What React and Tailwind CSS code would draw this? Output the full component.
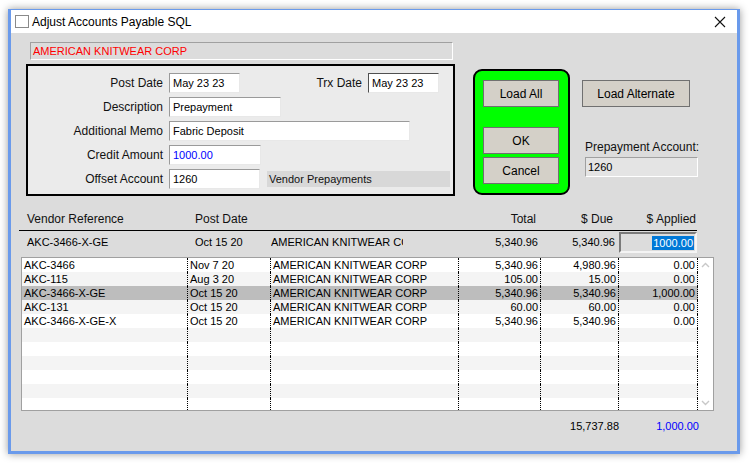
import React from 'react'

const FONT = { fontFamily: '"Liberation Sans", Arial, sans-serif' }

const ROWS = [
  ['AKC-3466', 'Nov 7 20', 'AMERICAN KNITWEAR CORP', '5,340.96', '4,980.96', '0.00'],
  ['AKC-115', 'Aug 3 20', 'AMERICAN KNITWEAR CORP', '105.00', '15.00', '0.00'],
  ['AKC-3466-X-GE', 'Oct 15 20', 'AMERICAN KNITWEAR CORP', '5,340.96', '5,340.96', '1,000.00'],
  ['AKC-131', 'Oct 15 20', 'AMERICAN KNITWEAR CORP', '60.00', '60.00', '0.00'],
  ['AKC-3466-X-GE-X', 'Oct 15 20', 'AMERICAN KNITWEAR CORP', '5,340.96', '5,340.96', '0.00'],
  ['', '', '', '', '', ''],
  ['', '', '', '', '', ''],
  ['', '', '', '', '', ''],
  ['', '', '', '', '', ''],
  ['', '', '', '', '', ''],
  ['', '', '', '', '', ''],
]

function Field({ w, children, blue, dark }) {
  return (
    <div
      className={`h-[20px] ${w} shrink-0 bg-white border-t border-l border-r border-b ${dark ? 'border-t-[#505050] border-l-[#505050]' : 'border-t-[#9a9a9a] border-l-[#9a9a9a]'} border-r-[#e8e8e8] border-b-[#e8e8e8] px-[3px] text-[11px] leading-[18px] ${blue ? 'text-[#0000ff]' : 'text-black'}`}
    >
      {children}
    </div>
  )
}

function Label({ children }) {
  return <div className="w-[135px] shrink-0 text-right text-[12px] text-[#111]">{children}</div>
}

function Btn({ w, children, className = '' }) {
  return (
    <div
      className={`flex h-[27px] ${w} items-center justify-center border border-[#707070] bg-[#d4d0c8] text-[12px] text-black ${className}`}
    >
      {children}
    </div>
  )
}

function GridRow({ r, i }) {
  const bg = i === 2 ? 'bg-[#bdbdbd]' : i % 2 === 1 ? 'bg-[#f4f4f4]' : 'bg-white'
  const cell = 'h-[14px] shrink-0 border-r border-dotted border-black px-[2px] overflow-hidden whitespace-nowrap'
  return (
    <div className={`flex ${bg} text-[11px] leading-[14px] text-black`}>
      <div className={`${cell} w-[166px]`}>{r[0]}</div>
      <div className={`${cell} w-[83px]`}>{r[1]}</div>
      <div className={`${cell} w-[188px]`}>{r[2]}</div>
      <div className={`${cell} w-[82px] text-right`}>{r[3]}</div>
      <div className={`${cell} w-[78px] text-right`}>{r[4]}</div>
      <div className={`${cell} w-[79px] text-right`}>{r[5]}</div>
    </div>
  )
}

export default function App() {
  return (
    <div className="h-[463px] w-[749px] overflow-hidden bg-white pl-[8px] pt-[9px]" style={FONT}>
      <div className="flex h-[445px] w-[732px] flex-col border-x-[3px] border-b-[3px] border-t border-[#6a9aeb] bg-[#dcdcdc] shadow-[0_0_8px_rgba(0,0,0,0.4)]">
        {/* title bar */}
        <div className="flex h-[23px] shrink-0 items-center bg-white">
          <div className="ml-[4px] h-[13px] w-[14px] border border-[#8a8a8a] bg-white" />
          <div className="ml-[3px] text-[12px] text-black">Adjust Accounts Payable SQL</div>
          <div className="flex-1" />
          <svg width="12" height="12" viewBox="0 0 12 12" className="mr-[11px]">
            <path d="M1 1 L11 11 M11 1 L1 11" stroke="#111" strokeWidth="1.1" />
          </svg>
        </div>

        {/* body */}
        <div className="flex flex-1 flex-col">
          <div className="ml-[19px] mt-[9px] h-[18px] w-[423px] border border-t-[#a0a0a0] border-l-[#a0a0a0] border-r-white border-b-white px-[2px] text-[11px] leading-[16px] text-[#ff0000]">
            AMERICAN KNITWEAR CORP
          </div>

          <div className="mt-[4px] flex items-start">
            <div className="ml-[15px] flex h-[132px] w-[429px] flex-col gap-[4px] border-2 border-black bg-[#ebebeb] pt-[7px]">
              <div className="flex items-center">
                <Label>Post Date</Label>
                <div className="ml-[6px]">
                  <Field w="w-[71px]">May 23 23</Field>
                </div>
                <div className="w-[122px] shrink-0 text-right text-[12px] text-[#111]">Trx Date</div>
                <div className="ml-[6px]">
                  <Field w="w-[71px]" dark>
                    May 23 23
                  </Field>
                </div>
              </div>
              <div className="flex items-center">
                <Label>Description</Label>
                <div className="ml-[6px]">
                  <Field w="w-[112px]">Prepayment</Field>
                </div>
              </div>
              <div className="flex items-center">
                <Label>Additional Memo</Label>
                <div className="ml-[6px]">
                  <Field w="w-[241px]">Fabric Deposit</Field>
                </div>
              </div>
              <div className="flex items-center">
                <Label>Credit Amount</Label>
                <div className="ml-[6px]">
                  <Field w="w-[92px]" blue>
                    1000.00
                  </Field>
                </div>
              </div>
              <div className="flex items-center">
                <Label>Offset Account</Label>
                <div className="ml-[6px]">
                  <Field w="w-[91px]">1260</Field>
                </div>
                <div className="ml-[7px] h-[16px] w-[183px] bg-[#d8d8d8] px-[2px] text-[11px] leading-[16px] text-[#111]">
                  Vendor Prepayments
                </div>
              </div>
            </div>

            <div className="ml-[18px] mt-[5px] flex h-[126px] w-[97px] flex-col rounded-[9px] border-2 border-black bg-[#00ff00] pl-[8px] pt-[9px]">
              <Btn w="w-[76px]">Load All</Btn>
              <Btn w="w-[76px]" className="mt-[20px]">
                OK
              </Btn>
              <Btn w="w-[76px]" className="mt-[3px]">
                Cancel
              </Btn>
            </div>

            <div className="ml-[12px] mt-[16px] flex flex-col">
              <Btn w="w-[108px]">Load Alternate</Btn>
              <div className="ml-[3px] mt-[33px] text-[12px] leading-[14px] text-[#111]">Prepayment Account:</div>
              <div className="ml-[3px] mt-[3px] h-[20px] w-[113px] border border-t-[#a0a0a0] border-l-[#a0a0a0] border-r-white border-b-white bg-[#e4e4e4] px-[2px] text-[11px] leading-[18px] text-black">
                1260
              </div>
            </div>
          </div>

          {/* table header */}
          <div className="mt-[15px] flex h-[16px] items-center text-[12px] text-[#111]">
            <div className="ml-[16px] w-[168px] shrink-0">Vendor Reference</div>
            <div className="w-[76px] shrink-0">Post Date</div>
            <div className="w-[188px] shrink-0" />
            <div className="w-[77px] shrink-0 text-right">Total</div>
            <div className="w-[77px] shrink-0 text-right">$ Due</div>
            <div className="w-[83px] shrink-0 text-right">$ Applied</div>
          </div>
          <div className="ml-[8px] mt-[3px] h-px w-[678px] bg-black" />

          {/* current row */}
          <div className="mt-px flex h-[21px] items-center text-[11px] text-black">
            <div className="ml-[16px] w-[168px] shrink-0">AKC-3466-X-GE</div>
            <div className="w-[76px] shrink-0">Oct 15 20</div>
            <div className="w-[132px] shrink-0 overflow-hidden whitespace-nowrap">AMERICAN KNITWEAR CORP</div>
            <div className="w-[56px] shrink-0" />
            <div className="w-[79px] shrink-0 text-right">5,340.96</div>
            <div className="w-[77px] shrink-0 text-right">5,340.96</div>
            <div className="ml-[4px] flex h-[21px] w-[78px] shrink-0 items-center justify-end border-2 border-t-[#7a7a7a] border-l-[#7a7a7a] border-r-[#f4f4f4] border-b-[#f4f4f4] pr-px">
              <span className="bg-[#0078d7] px-[1px] leading-[14px] text-white">1000.00</span>
            </div>
          </div>

          {/* grid */}
          <div className="ml-[10px] mt-[4px] flex h-[154px] w-[693px] overflow-hidden border border-[#a0a0a0] bg-white">
            <div className="flex w-[676px] flex-col">
              {ROWS.map((r, i) => (
                <GridRow key={i} r={r} i={i} />
              ))}
            </div>
            <div className="flex w-[15px] flex-col items-center justify-between py-[4px]">
              <svg width="9" height="6" viewBox="0 0 9 6">
                <path d="M1 5 L4.5 1.5 L8 5" stroke="#c8c8c8" strokeWidth="1.4" fill="none" />
              </svg>
              <svg width="9" height="6" viewBox="0 0 9 6">
                <path d="M1 1 L4.5 4.5 L8 1" stroke="#c8c8c8" strokeWidth="1.4" fill="none" />
              </svg>
            </div>
          </div>

          {/* totals */}
          <div className="mt-[8px] flex h-[14px] items-center text-[11px]">
            <div className="ml-[530px] w-[78px] shrink-0 text-right text-black">15,737.88</div>
            <div className="w-[80px] shrink-0 text-right text-[#0000ff]">1,000.00</div>
          </div>
        </div>
      </div>
    </div>
  )
}
